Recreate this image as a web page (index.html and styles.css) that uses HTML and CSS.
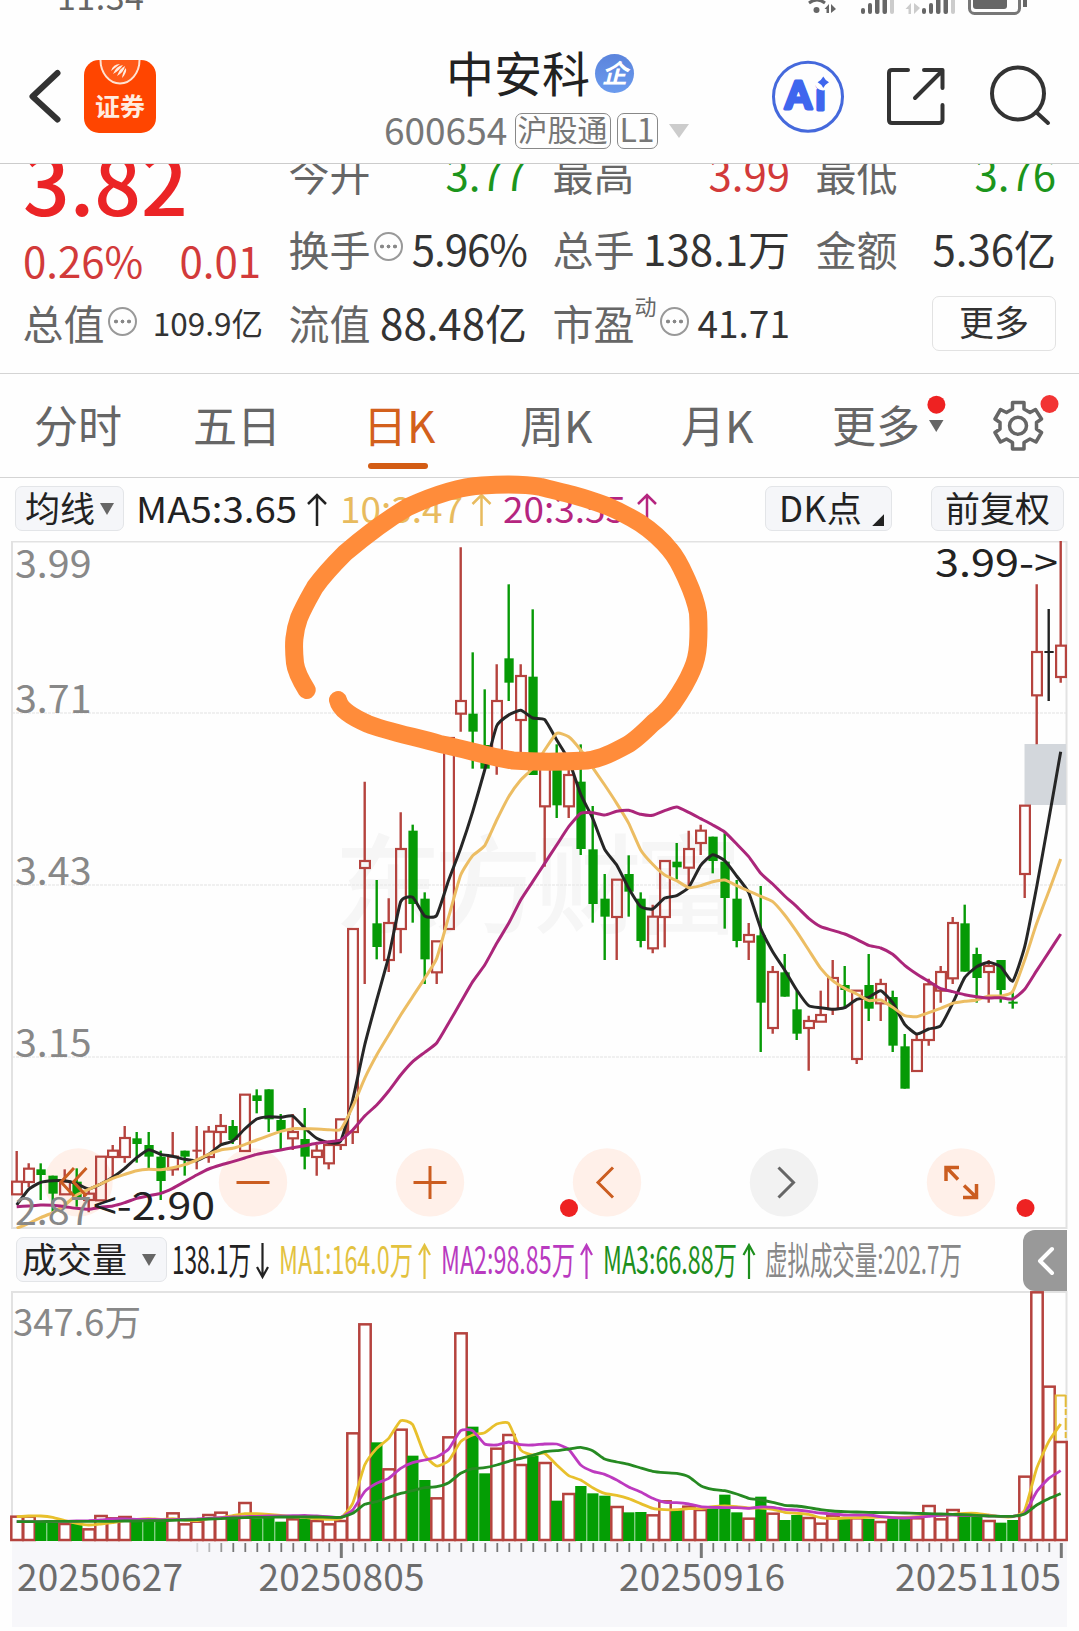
FILE: index.html
```html
<!DOCTYPE html>
<html lang="zh-CN">
<head>
<meta charset="utf-8">
<title>中安科 600654</title>
<link rel="stylesheet" href="styles.css">
</head>
<body>
<div class="screen">
  <div class="status">
    <span class="clock">11:34</span>
    <svg class="status-icons" viewBox="800 0 232 22" width="232" height="22">
      <g fill="none" stroke="#666" stroke-width="3"><path d="M809 3q8-6 16 0"/><rect x="969.5" y="-12" width="50" height="25.5" rx="5" stroke="#777"/></g>
      <g fill="#666"><circle cx="816.500" cy="10" r="3"/><path d="M829 4v9h-2.500v-4h-2zM831 4v9l5-4z"/>
        <rect x="861" y="8" width="4" height="6" rx="2"/><rect x="868" y="3" width="4" height="11" rx="2"/><rect x="875" y="-3" width="4.500" height="17" rx="2"/><rect x="882.500" y="-6" width="4.500" height="20" rx="2"/>
        <rect x="922" y="8" width="4" height="6" rx="2"/><rect x="929" y="3" width="4" height="11" rx="2"/><rect x="936" y="-3" width="4.500" height="17" rx="2"/><rect x="943.500" y="-6" width="4.500" height="20" rx="2"/>
        <rect x="973" y="-8" width="34" height="17" rx="3"/><rect x="1023" y="-4" width="4" height="11"/></g>
      <g fill="#ccc"><rect x="890" y="-9" width="4" height="23" rx="2"/><rect x="951" y="-9" width="4" height="23" rx="2"/><path d="M911 3v11h-2.500v-5h-3zM914 3v11l6-6z"/></g>
    </svg>
  </div>

  <header class="header">
    <svg class="back" viewBox="28 60 34 73" width="34" height="73"><path d="M57.500 73L32.500 96.500L57.500 119.500" fill="none" stroke="#333" stroke-width="6" stroke-linecap="round" stroke-linejoin="round"/></svg>
    <div class="app">
      <svg viewBox="84 60 72 28" width="72" height="28"><path d="M100.500 60a19.500 23.500 0 0 0 39 0" fill="#ff5a18" stroke="#ffe2d2" stroke-width="2"/><path d="M111 71q2-7 9-7q-5 4-9 7zM113 74q3-8 10-9q-4 6-10 9zM117 76q3-8 8-10q-1 6-8 10zM122 78q1-7 4-10q1 5-4 10z" fill="#ffece0"/></svg>
      <span>证券</span>
    </div>
    <div class="stock">
      <div class="name">中安科<span class="badge">企</span></div>
      <div class="code"><span class="digits">600654</span><span class="tag tag-hgt">沪股通</span><span class="tag tag-l1">L1</span><i class="caret"></i></div>
    </div>
    <svg class="actions" viewBox="770 58 286 78" width="286" height="78">
      <circle cx="808" cy="96.700" r="34.500" fill="none" stroke="#4569dc" stroke-width="3"/>
      <text x="785 815.500" y="109 110" class="ai">Ai</text>
      <circle cx="823" cy="82" r="8.500" fill="#fefefe"/>
      <path d="M823.300 76.500q2 4 5.700 5.800q-3.700 2-5.700 5.800q-2-4-5.700-5.800q3.700-2 5.700-5.800z" fill="#3f66ee"/>
      <g fill="none" stroke="#333" stroke-width="4" stroke-linecap="round" stroke-linejoin="round">
        <path d="M908 70H892q-3 0-3 3V120q0 3 3 3H939q3.500 0 3.500-3V105M924 70H942.500V88M942 71L915 98"/>
        <circle cx="1018" cy="93.500" r="26"/><path d="M1036 112L1048 123"/>
      </g>
    </svg>
  </header>

  <section class="stats">
    <div class="stats-grid">
      <div class="price-block"><div class="price">3.82</div><div class="change"><span>0.26%</span><span>0.01</span></div></div>
      <div class="cell"><span class="label">今开</span><span class="val down">3.77</span></div>
      <div class="cell"><span class="label">最高</span><span class="val up">3.99</span></div>
      <div class="cell"><span class="label">最低</span><span class="val down">3.76</span></div>
      <div class="cell"><span class="label">换手</span><i class="info"></i><span class="val pct">5.96%</span></div>
      <div class="cell"><span class="label">总手</span><span class="val">138.1万</span></div>
      <div class="cell"><span class="label">金额</span><span class="val">5.36亿</span></div>
      <div class="cell total"><span class="label">总值</span><i class="info"></i><span class="val small">109.9亿</span></div>
      <div class="cell"><span class="label">流值</span><span class="val">88.48亿</span></div>
      <div class="cell pe"><span class="label">市盈</span><span class="sup">动</span><i class="info"></i><span class="val mid">41.71</span></div>
      <div class="cell more-cell"><span class="more">更多</span></div>
    </div>
  </section>

  <nav class="tabs">
    <span class="tab t1">分时</span><span class="tab t2">五日</span><span class="tab t3 active">日K</span><span class="tab t4">周K</span><span class="tab t5">月K</span><span class="tab t6">更多</span>
    <svg class="tab-icons" viewBox="926 390 140 70" width="140" height="70">
      <path d="M929 420h14.500l-7.250 12z" fill="#666"/>
      <circle cx="936.400" cy="404.700" r="9" fill="#ee2222"/>
      <path d="M1012.500 402.500H1024V409L1030 412.500L1035.500 409.500L1041.500 419L1036.500 422.500V429L1041.500 432.500L1036 442L1030 439L1024 442.500V449H1012.500V442.500L1006.500 439L1000.500 442L995 432.500L1000 429V422.500L995 419L1000.500 409.500L1006.500 412.500L1012.500 409Z" fill="none" stroke="#666" stroke-width="3.500" stroke-linejoin="round"/>
      <circle cx="1018" cy="425.700" r="8.500" fill="none" stroke="#666" stroke-width="3.500"/>
      <circle cx="1049.500" cy="404" r="9" fill="#f23434"/>
    </svg>
  </nav>

  <div class="indicators">
    <span class="btn b-ma">均线<i></i></span>
    <svg class="legend" viewBox="130 478 530 63" width="530" height="63">
      <g class="legend-text">
        <text x="136" y="522.500" textLength="161" lengthAdjust="spacingAndGlyphs" fill="#222">MA5:3.65</text>
        <text x="340" y="522.500" textLength="123" lengthAdjust="spacingAndGlyphs" fill="#e8bb5e">10:3.47</text>
        <text x="503" y="522.500" textLength="123" lengthAdjust="spacingAndGlyphs" fill="#b5257f">20:3.55</text>
      </g>
      <g fill="none" stroke-width="2.500"><path stroke="#222" d="M317 526V495M308 504L317 495L326 504"/><path stroke="#e8bb5e" d="M481.500 526V495M472.500 504L481.500 495L490.500 504"/><path stroke="#b5257f" d="M647 520V495M638 504L647 495L656 504"/></g>
    </svg>
    <span class="btn b-dk">DK点<i></i></span>
    <span class="btn b-fq">前复权</span>
  </div>

  <svg class="price-chart" id="price" viewBox="0 541 1079 688" width="1079" height="688"></svg>

  <div class="volume-bar">
    <span class="btn b-vol">成交量<i></i></span>
    <svg class="vol-legend" viewBox="170 1229 800 62" width="800" height="62">
      <text x="172" y="1273.500" textLength="79" lengthAdjust="spacingAndGlyphs" fill="#222">138.1万</text>
      <text x="279" y="1273.500" textLength="134" lengthAdjust="spacingAndGlyphs" fill="#e3c23f">MA1:164.0万</text>
      <text x="441" y="1273.500" textLength="134" lengthAdjust="spacingAndGlyphs" fill="#b93ac0">MA2:98.85万</text>
      <text x="603" y="1273.500" textLength="134" lengthAdjust="spacingAndGlyphs" fill="#1d8f1d">MA3:66.88万</text>
      <text x="765" y="1273.500" textLength="197" lengthAdjust="spacingAndGlyphs" fill="#888">虚拟成交量:202.7万</text>
      <g fill="none" stroke-width="2.200"><path stroke="#222" d="M262.500 1243V1277M257 1267L262.500 1277L268 1267"/><path stroke="#e3c23f" d="M424.500 1279V1245M419 1255L424.500 1245L430 1255"/><path stroke="#b93ac0" d="M586.500 1279V1245M581 1255L586.500 1245L592 1255"/><path stroke="#1d8f1d" d="M749 1279V1245M743.500 1255L749 1245L754.500 1255"/></g>
    </svg>
    <span class="drawer"><svg viewBox="0 0 44 61" width="44" height="61"><path d="M29 19L17 31L29 43" fill="none" stroke="#fff" stroke-width="4" stroke-linecap="round" stroke-linejoin="round"/></svg></span>
  </div>

  <svg class="volume-chart" id="volume" viewBox="0 1291 1079 340" width="1079" height="340"></svg>

  <svg class="marker" viewBox="280 460 440 320" width="440" height="320"><path d="M306.700 690C303 684 296 672 295 663C293 644 294 632 299 618C304 606 310 596 315 587C325 573 335 563 345 553C365 536 386 520 408 507C432 496 456 487 482 485.500C505 484 525 484 541 487C552 490 562 492 573 495C584 498 596 502 607 506C619 511 630 517 640 523C652 531 662 540 670 550C678 559 682 569 687 580C692 591 696 602 698 613Q699 629 698 645Q697 659 692 670C687 682 680 693 673 703C667 711 661 717 653 723C645 731 636 740 627 745C614 752 601 759 587 760.500C562 762 535 762 513 760.500C490 757 465 749 440 744C420 738 385 731 368 724C350 716 340 709 338 700" fill="none" stroke="#ff8c3a" stroke-width="18" stroke-linecap="round" stroke-linejoin="round"/></svg>
</div>
<script src="chart.js"></script>
</body>
</html>
```
FILE: styles.css
```css
* { box-sizing: border-box; }
body { margin: 0; background: #fff; font-family: "Noto Sans CJK SC", "Noto Sans", sans-serif; color: #333; }
svg { display: block; flex: none; }
i { flex: none; }
.screen { position: relative; width: 1079px; height: 1631px; overflow: hidden; background: #fefefe; }

.status { display: flex; height: 22px; overflow: hidden; padding-left: 57px; }
.clock { width: 743px; font-size: 34px; line-height: 40px; margin-top: -24px; color: #666; letter-spacing: .5px; }

.header { display: flex; height: 142px; padding: 38px 0 0 28px; border-bottom: 1.500px solid #ccc; }
.app { width: 72px; height: 73px; margin-left: 22px; border-radius: 15px; background: #ff4500; overflow: hidden; text-align: center; }
.app span { display: block; font-size: 25px; font-weight: 700; line-height: 30px; margin-top: 2px; color: #ffece0; }
.stock { width: 310px; margin: -14px 0 0 229px; }
.name { display: flex; align-items: center; height: 50px; margin-left: 61px; font-size: 48px; line-height: 50px; color: #222; }
.badge { width: 39px; height: 39px; margin: 5px 0 0 5px; border-radius: 50%; background: linear-gradient(#5b84dc, #6b9bee); color: #fff; font-size: 26px; font-weight: 700; line-height: 36px; text-align: center; font-style: italic; }
.code { display: flex; align-items: center; height: 36px; margin-top: 17px; color: #777; }
.digits { width: 131.500px; margin-left: -1px; font-size: 37px; line-height: 32px; padding-bottom: 5px; }
.tag { height: 36px; border: 1.500px solid #888; border-radius: 7px; font-size: 30px; line-height: 29px; text-align: center; }
.tag-hgt { width: 96px; margin-left: -1px; }
.tag-l1 { width: 41px; margin-left: 6px; font-size: 32px; }
.caret { margin-left: 11px; border: 10.500px solid transparent; border-top: 14px solid #ccc; border-bottom: 0; }
.actions { margin: -2px 0 0 75px; }
.ai { font-family: Lato, Inter, sans-serif; font-weight: 900; font-size: 38px; fill: #3f66ee; stroke: #3f66ee; stroke-width: 3px; stroke-linejoin: round; }

.stats { height: 209px; overflow: hidden; }
.stats-grid { display: grid; grid-template-columns: 240px 238px 237px 240px; grid-auto-rows: 74.500px; column-gap: 26px; margin: -28px 0 0 23px; }
.price-block { grid-row: span 2; padding-top: 5px; }
.price { font-size: 82px; line-height: 80px; font-weight: 500; color: #eb2426; }
.change { display: flex; justify-content: space-between; margin-top: 14px; font-size: 42px; line-height: 50px; color: #d23a3a; padding-right: 2px; }
.cell { display: flex; align-items: center; line-height: 60px; white-space: nowrap; }
.label { font-size: 41px; color: #666; margin-left: -.5px; }
.val { margin-left: auto; font-size: 42px; }
.up { color: #d23a3a; }
.down { color: #1c951c; }
.pct { letter-spacing: -1px; }
.small { font-size: 31.500px; }
.mid { font-size: 37px; margin: 0 0 0 9px; }
.total { grid-column: 1; }
.info { width: 29px; height: 29px; margin: 0 0 2px 3px; border: 2px solid #999; border-radius: 50%; background: radial-gradient(circle at 6px 12.500px, #888 1.700px, transparent 2.200px), radial-gradient(circle at 12.500px 12.500px, #888 1.700px, transparent 2.200px), radial-gradient(circle at 19px 12.500px, #888 1.700px, transparent 2.200px); }
.sup { font-size: 22px; line-height: 24px; color: #666; margin-bottom: 34px; }
.more-cell { justify-content: flex-end; }
.more { width: 124px; height: 55px; margin-top: 2px; border: 1.500px solid #e2e2e2; border-radius: 7px; font-size: 35px; line-height: 48px; text-align: center; }

.tabs { display: flex; height: 105px; border-top: 1.500px solid #d4d4d4; border-bottom: 1.500px solid #d4d4d4; font-size: 44px; line-height: 101px; color: #666; padding-left: 34px; }
.tab { white-space: nowrap; }
.t1 { width: 159px; } .t2 { width: 170px; } .t3 { width: 157px; } .t4 { width: 161px; } .t5 { width: 151px; } .t6 { width: 94px; }
.active { position: relative; color: #d3601c; }
.active::after { content: ""; position: absolute; left: 5px; top: 88.500px; width: 60px; height: 6px; border-radius: 3px; background: #d35c14; }
.tab-icons { margin-top: 16px; }

.indicators { display: flex; height: 63px; padding: 8px 0 0 15px; }
.btn { flex: none; display: flex; height: 45px; border: 1.500px solid #e3e5e8; border-radius: 7px; background: #f5f6f9; font-size: 35px; line-height: 39.500px; color: #222; white-space: nowrap; }
.btn i { border: 7px solid transparent; border-top: 12px solid #666; border-bottom: 0; }
.b-ma { width: 109px; padding-left: 9px; }
.b-ma i { margin: 16px 0 0 5px; }
.legend { margin: -8px 0 0 6px; }
.legend-text { font-size: 36px; }
.b-dk { width: 127px; margin-left: 105px; padding-left: 13px; letter-spacing: .5px; }
.b-dk i { border: 0; width: 12px; height: 12px; margin: 27px 0 0 10px; background: #222; clip-path: polygon(100% 0, 100% 100%, 0 100%); }
.b-fq { width: 133px; margin-left: 39px; padding-left: 13px; }

.volume-bar { display: flex; height: 62px; padding: 8px 0 0 16px; }
.b-vol { width: 151px; padding-left: 5px; }
.b-vol i { margin: 16px 0 0 15px; }
.vol-legend { margin: -8px 0 0 3px; font-size: 38px; }
.drawer { width: 44px; height: 61px; margin: -7px 0 0 53px; background: #999; border-radius: 12px 0 0 12px; }

.axis-label { font-size: 38px; fill: #888; }
.callout { font-size: 38px; fill: #222; }
.watermark { font-size: 108px; font-weight: 500; fill: #f6f6f6; }
.date { font-size: 37px; fill: #6c6c6c; }
.vol-max { font-size: 36.500px; fill: #888; }
.marker { position: absolute; left: 280px; top: 460px; }
```
FILE: chart.js
```js
const X0 = 16.7, STEP = 12;
const cx = i => X0 + STEP * i;
const RED = '#b5433e', GREEN = '#069a06';

// direction, high, body top, body bottom, low; rows share an origin and are stored in thirds of a pixel
const blocks = [
  [780, `r 1113 1205 1243 1243|r 1150 1166 1206 1222|g 1150 1168 1185 1260|g 1187 1187 1241 1300|r 1168 1205 1243 1243|g 1165 1205 1258 1280|r 1230 1241 1260 1297|r 1130 1130 1261 1261|r 1095 1112 1131 1190|r 1038 1074 1131 1148|g 1056 1075 1092 1148|g 1056 1095 1130 1165|g 1112 1130 1203 1260|r 1056 1130 1168 1187|g 1112 1112 1130 1187|r 1038 1112 1112 1168|r 1038 1055 1131 1148|r 1002 1038 1056 1092|g 1020 1038 1080 1092|r 944 944 1113 1113|g 928 946 963 1000|g 928 928 1018 1056|g 1002 1020 1053 1110|r 1002 1056 1075 1110|g 984 1077 1130 1168|r 1095 1112 1131 1187|r 1095 1095 1150 1168|r 1018 1018 1095 1110|r 447 447 1056 1092`],
  [530, `r 755 993 1014 1362|g 1050 1180 1251 1288|r 1105 1179 1290 1326|r 847 957 1197 1270|g 884 902 1122 1178|g 1087 1106 1288 1362|r 1234 1234 1327 1362|r 624 624 1197 1197|r 52 513 551 605|g 367 551 605 716|g 478 645 716 716|r 403 513 660 734|g 163 385 458 513|r 403 438 570 690|g 238 440 735 735|r 690 690 829 1010|g 643 690 826 864|r 715 735 829 864|g 643 755 957 975|g 828 958 1122 1178`],
  [760, `g 342 416 470 600|r 359 359 471 600|g 286 342 395 470|g 397 416 543 562|r 434 470 565 580|r 303 303 471 562|g 249 305 322 358|r 212 267 323 378|r 194 212 249 285|g 230 230 303 340|g 220 305 414 506|g 360 416 543 562|r 489 525 545 600|g 378 526 728 876|r 618 636 804 821|g 582 637 710 710|g 692 748 821 840|r 767 783 804 932|r 692 765 785 785|r 600 654 747 765|g 618 675 690 745|r 692 692 897 912|g 582 675 746 783|r 656 672 730 783|g 692 711 857 876|g 822 859 986 986|r 822 840 933 933|r 656 673 840 857|r 618 636 692 728|r 471 489 655 672|g 434 490 635 635|g 563 582 654 728|r 600 618 636 728|g 600 600 690 728|g 692 728 731 746|r 137 137 342 414`],
  [530, `r 163 366 496 643|k 237 366 366 513|r 33 347 441 458`]
];
const candles = blocks.flatMap(([o, s]) => s.split('|').map(t => {
  const [c, ...v] = t.split(' ');
  return [c, ...v.map(n => o + n / 3)];
}));

const series = parts => parts.flatMap(([o, s]) => s.split(' ').map(n => o + n / 3));
const curve = (ys, color, w) => {
  const p = ys.map((y, i) => [cx(i), y]);
  let d = `M${p[0]}`;
  for (let i = 1; i < p.length; i++) {
    const a = p[Math.max(0, i - 2)], b = p[i - 1], c = p[i], e = p[Math.min(p.length - 1, i + 1)];
    d += `C${b[0] + (c[0] - a[0]) / 12},${b[1] + (c[1] - a[1]) / 12} ${c[0] - (e[0] - b[0]) / 12},${c[1] - (e[1] - b[1]) / 12} ${c}`;
  }
  return `<path d="${d}" fill="none" stroke="${color}" stroke-width="${w}" stroke-linejoin="round"/>`;
};

const ma5 = series([
  [780, '1275 1228 1207 1202 1202 1211 1227 1212 1192 1165 1133 1109 1123 1129 1138 1142 1123 1095 1083 1047 1017 1010 1012 1008 1044 1075 1088 1083 960 795 660'],
  [530, '1280 1115 1102 1158 1156 1050 955 845 720 588 555 541 564 569 630 690 793 865'],
  [760, '268 315 385 440 447 414 407 382 316 284 302 348 398 505 575 630 690 737 743 748 743 718 712 692 728 793 822 807 797 730 653 620 607 620 663 560 380 180 -25']]);
const ma10 = series([
  [780, '1345 1330 1313 1298 1275 1245 1228 1212 1195 1183 1172 1168 1169 1163 1154 1140 1123 1110 1105 1094 1080 1067 1054 1046 1046 1047 1049 1048 980 895 825 765'],
  [530, '1455 1400 1345 1285 1160 1035 977 947 870 800 750 715 660 610 620 660 713'],
  [760, '75 130 190 270 313 345 362 383 377 365 360 377 393 409 425 465 515 570 625 662 685 702 722 720 742 767 770 758 745 730 724 720 708 708 695 600 490 395 297']]);
const ma20 = series([
  [780, '1280 1278 1275 1276 1280 1285 1288 1282 1278 1268 1255 1247 1240 1225 1205 1185 1167 1155 1145 1134 1123 1116 1110 1103 1097 1090 1085 1080 1050 1008 975 933 885 845 817 789 729'],
  [530, '1417 1355 1305 1240 1180 1110 1055 1000 945 890 850 848'],
  [760, '165 154 151 163 166 152 141 157 176 195 216 252 290 340 372 408 440 475 500 511 522 538 556 564 583 616 642 664 686 695 704 710 714 713 717 688 632 577 522']]);

let s = `<text class="watermark" x="334" y="925" textLength="408">东方财富</text>`;
[713, 885, 1057].forEach(y => s += `<path d="M12 ${y}H1066" stroke="#ebebeb" stroke-width="1.500" stroke-dasharray="3 1"/>`);
s += `<rect x="12" y="541.500" width="1054.500" height="686.500" fill="none" stroke="#e2e2e2" stroke-width="2"/>`;
s += `<rect x="1024.500" y="744" width="41.500" height="61" fill="#d3d7dc"/>`;
// discs of the floating chart controls
[78.5, 253, 430, 607, 784, 961].forEach((x, i) => s += `<circle cx="${x}" cy="1182.400" r="34.200" fill="${i === 4 ? '#f2f2f2' : '#fff0e9'}"/>`);
candles.forEach(([c, hi, t, b, lo], i) => {
  const x = cx(i), col = c === 'r' ? RED : c === 'g' ? GREEN : '#222';
  if (c === 'r' && b - t > 1) {
    s += `<path d="M${x} ${hi}V${t}M${x} ${b}V${lo}" stroke="${col}" stroke-width="2.400"/><rect x="${x - 4.6}" y="${t}" width="9.800" height="${b - t}" fill="none" stroke="${col}" stroke-width="2.200"/>`;
  } else {
    s += `<path d="M${x} ${hi}V${lo}" stroke="${col}" stroke-width="2.400"/><rect x="${x - 4.3}" y="${t - (b - t < 1.1 ? 1 : 0)}" width="9.300" height="${Math.max(2, b - t)}" fill="${col}"/>`;
  }
});
s += curve(ma5, '#262626', 3) + curve(ma10, '#ecbd63', 3) + curve(ma20, '#ab267a', 3);
[['3.99', 578], ['3.71', 713], ['3.43', 884.5], ['3.15', 1057], ['2.87', 1224.5]].forEach(([t, y]) => s += `<text class="axis-label" x="15" y="${y}" textLength="76.500" lengthAdjust="spacingAndGlyphs">${t}</text>`);
s += `<text class="callout" x="935" y="577" textLength="123" lengthAdjust="spacingAndGlyphs">3.99-&gt;</text><text class="callout" x="93" y="1219.500" textLength="122" lengthAdjust="spacingAndGlyphs">&lt;-2.90</text>`;

// glyphs of the floating chart controls
s += `<g fill="none" stroke="#cb5d20" stroke-width="3"><path d="M74 1168L61 1182L74 1196M86.500 1168L73.500 1182L86.500 1196M236.500 1182.500H269.500M413.500 1182.500H446.500M430 1166V1199M613 1167.500L598 1182.500L613 1197.500"/><path stroke-width="3.500" d="M959 1167.500H946V1181M947 1168L958 1179.500M963 1197.500H976.500V1184M976 1197L964 1185.500"/></g><path d="M778.500 1167.500L793.500 1182.500L778.500 1197.500" fill="none" stroke="#666" stroke-width="3"/>`;
s += `<circle cx="569" cy="1208" r="9" fill="#ee2222"/><circle cx="1025.500" cy="1208" r="9" fill="#ee2222"/>`;
document.getElementById('price').innerHTML = s;

const dirs = 'rrggrgrrrrgggrrrrrgrgggrgrrrrrgrrggrrrggrrrgrgrgggrggrrgrrggg' + 'rgrggrrrgrgrggrrrrggrggrrrr';
const tops = series([[1220, '890 890 905 905 912 910 928 888 895 891 905 905 905 880 913 905 885 878 895 849 895 893 905 898 897 903 913 903 640 313 667 748 629 707 780 835 652 340 620 760 686 645 735 707 729 842 822 798 820 827 861 877 876 886 844 870 860 870 865 824 877 896 830 881 900 885 894 911 887 895 895 897 906 895 893 895 858 898 870 888 890 903 908 900 770 217 500 666']]);
const BASE = 1540;
let v = `<rect x="12" y="${BASE}" width="1055" height="87" fill="#f7f7fa"/><path d="M12 ${BASE}V1292H1066.500V${BASE}" fill="none" stroke="#e2e2e2" stroke-width="2"/>`;
v += `<text class="vol-max" x="13" y="1335.500" textLength="128" lengthAdjust="spacingAndGlyphs">347.6万</text>`;
tops.forEach((t, i) => {
  const x = cx(i);
  if (i === 87) v += `<path d="M${x - 5} ${t}V1395.500H${x + 5}" fill="none" stroke="#e3bb3a" stroke-width="2.200"/><path d="M${x + 5} 1395V${t}" stroke="#e3bb3a" stroke-width="2" stroke-dasharray="12 2 6 3"/>`;
  v += dirs[i] === 'r'
    ? `<rect x="${x - 5.4}" y="${t}" width="11.400" height="${BASE - t}" fill="#fff" stroke="${RED}" stroke-width="2.500"/>`
    : `<rect x="${x - 5.5}" y="${t}" width="11.300" height="${BASE + 1 - t}" fill="#049e04"/>`;
});
const v1 = series([[1220, '890 888 888 892 902 910 915 912 908 902 898 896 898 896 900 902 896 893 887 881 881 883 886 890 892 896 898 895 850 735 685 655 602 614 705 738 722 665 645 638 612 610 690 705 700 735 767 780 803 820 826 836 851 865 869 869 866 866 860 858 860 864 864 868 877 880 883 893 896 894 893 892 891 892 892 890 887 887 883 880 880 885 890 890 870 745 665 612']]);
const v2 = series([[1220, '905 905 905 904 904 903 902 900 897 897 898 898 899 899 898 897 895 893 891 890 889 888 888 887 886 888 890 892 870 815 790 775 745 728 720 711 687 632 632 672 675 666 674 675 672 672 688 735 754 763 780 801 816 835 847 848 852 860 862 863 863 865 861 862 868 870 874 879 882 885 885 885 890 893 894 892 889 886 885 886 887 888 889 889 880 815 775 752']]);
const v3 = series([[1220, '905 905 905 904 904 904 904 904 904 903 903 902 902 901 900 899 897 896 894 893 892 892 891 891 891 891 892 892 880 853 845 832 820 812 803 800 788 760 746 743 735 724 715 706 695 692 687 682 692 717 726 733 744 754 758 760 770 797 808 812 822 835 840 847 856 858 863 869 873 875 876 877 878 878 879 880 881 882 883 884 886 888 889 889 882 855 836 821']]);
v += curve(v1, '#e8c02c', 2.8) + curve(v2, '#bd3abf', 2.8) + curve(v3, '#268a22', 2.8);
for (let i = 15; i < 88; i++) {
  const major = i === 27 || i === 57 || i === 87;
  v += `<path d="M${cx(i) + 0.6} 1543V${major ? 1558 : 1552}" stroke="#777" stroke-width="${major ? 3 : 1.8}" opacity="${Math.min(1, (i - 14) * 0.25)}"/>`;
}
[['20250627', 17], ['20250805', 258.5], ['20250916', 619], ['20251105', 895]].forEach(([t, x]) => v += `<text class="date" x="${x}" y="1591" textLength="166">${t}</text>`);
document.getElementById('volume').innerHTML = v;
```
